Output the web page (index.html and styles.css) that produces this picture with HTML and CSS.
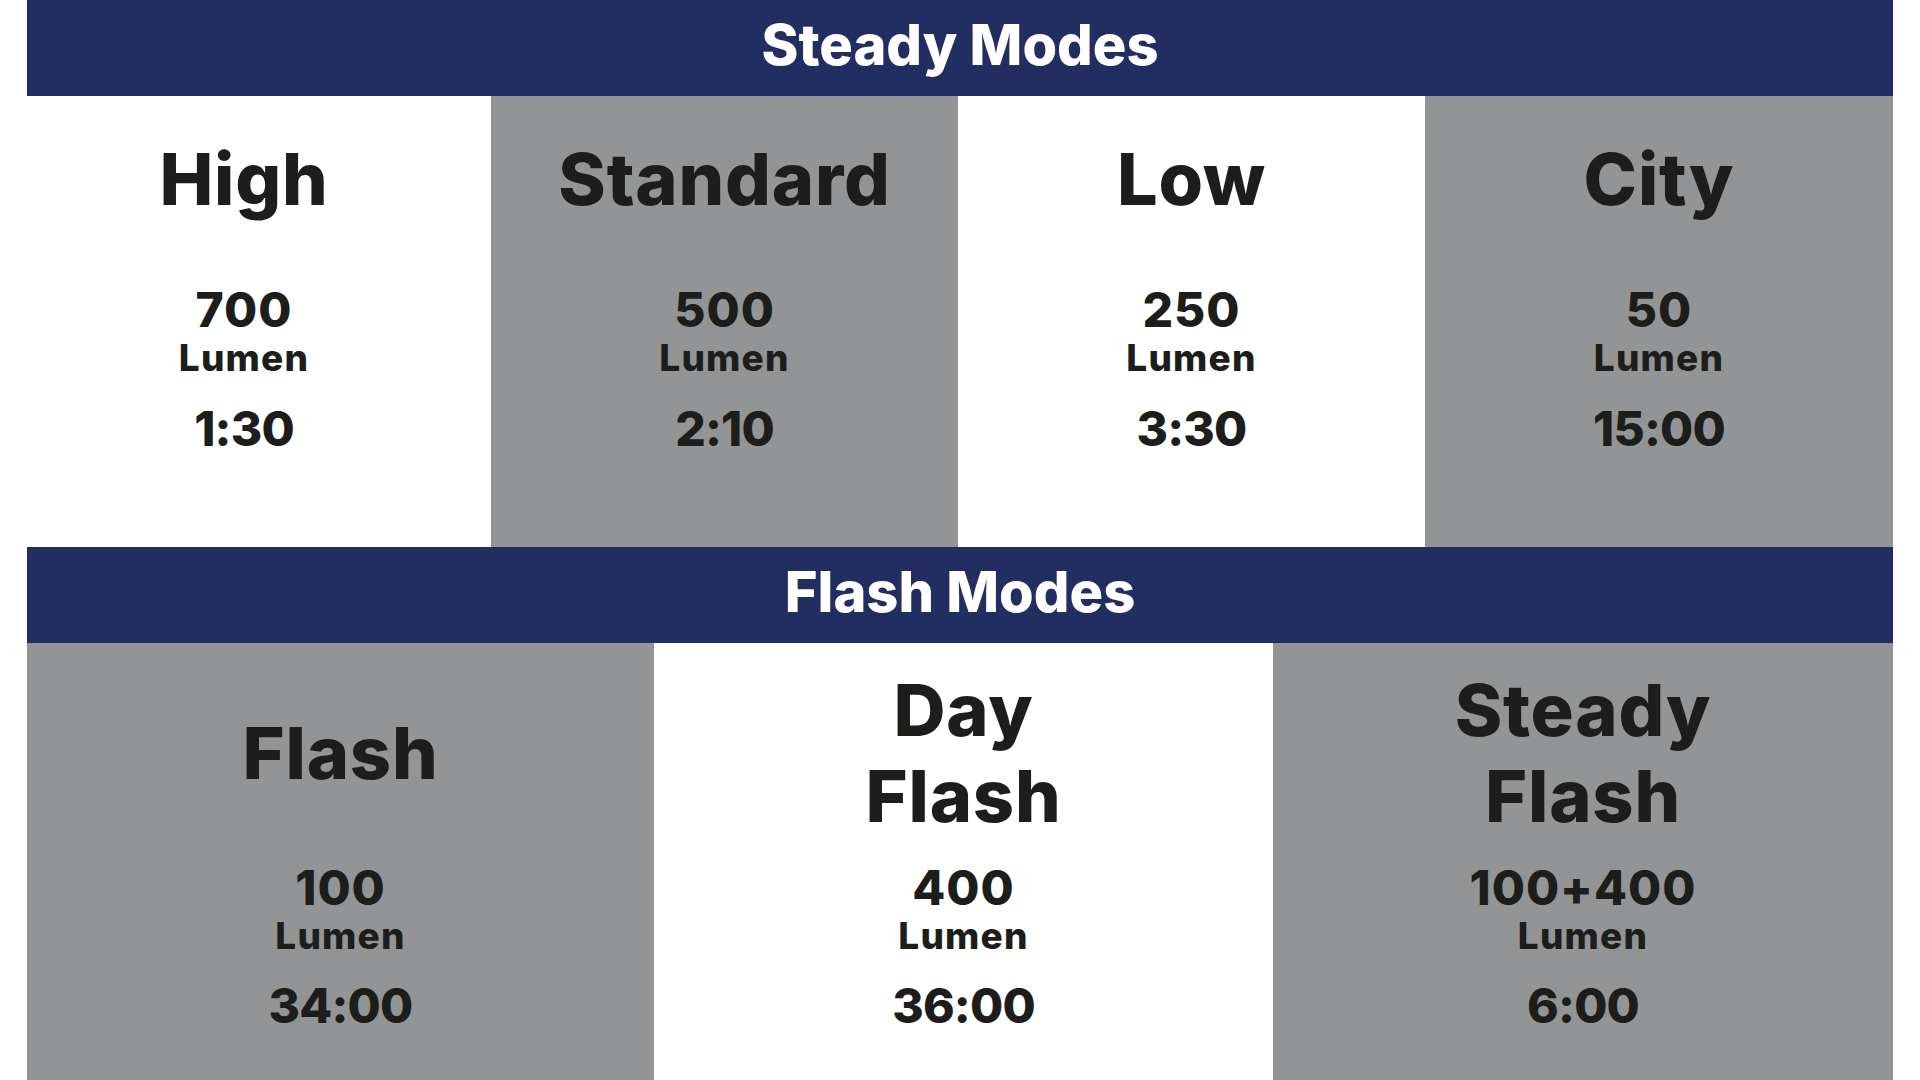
FILE: index.html
```html
<!DOCTYPE html>
<html lang="en">
<head>
<meta charset="utf-8">
<title>Modes</title>
<link rel="stylesheet" href="styles.css">
</head>
<body>
<main class="table">
  <section class="band">
    <h2 class="band-title">Steady Modes</h2>
  </section>
  <section class="row row-steady">
    <div class="cell white shift">
      <div class="title">High</div>
      <div class="num">700</div>
      <div class="unit">Lumen</div>
      <div class="time">1:30</div>
    </div>
    <div class="cell gray">
      <div class="title">Standard</div>
      <div class="num">500</div>
      <div class="unit">Lumen</div>
      <div class="time">2:10</div>
    </div>
    <div class="cell white">
      <div class="title">Low</div>
      <div class="num">250</div>
      <div class="unit">Lumen</div>
      <div class="time">3:30</div>
    </div>
    <div class="cell gray">
      <div class="title">City</div>
      <div class="num">50</div>
      <div class="unit">Lumen</div>
      <div class="time">15:00</div>
    </div>
  </section>
  <section class="band">
    <h2 class="band-title">Flash Modes</h2>
  </section>
  <section class="row row-flash">
    <div class="cell gray">
      <div class="title-box"><div class="title">Flash</div></div>
      <div class="num">100</div>
      <div class="unit">Lumen</div>
      <div class="time">34:00</div>
    </div>
    <div class="cell white">
      <div class="title-box"><div class="title">Day</div><div class="title">Flash</div></div>
      <div class="num">400</div>
      <div class="unit">Lumen</div>
      <div class="time">36:00</div>
    </div>
    <div class="cell gray">
      <div class="title-box"><div class="title">Steady</div><div class="title">Flash</div></div>
      <div class="num">100+400</div>
      <div class="unit">Lumen</div>
      <div class="time">6:00</div>
    </div>
  </section>
</main>
</body>
</html>
```
FILE: styles.css
```css
html, body {
  margin: 0;
  padding: 0;
  background: #ffffff;
}

body {
  font-family: "Inter", "Open Sans", "DejaVu Sans", sans-serif;
  font-weight: 800;
  color: #1d1d1b;
  overflow: hidden;
  height: 1080px;
}

.table {
  margin-left: 27px;
  width: 1866px;
}

.band {
  background: #222d62;
  height: 96px;
  box-sizing: border-box;
  padding-bottom: 7px;
  display: flex;
  align-items: center;
  justify-content: center;
}

.band-title {
  margin: 0;
  font-size: 56px;
  line-height: 56px;
  font-weight: 800;
  color: #ffffff;
  letter-spacing: 0;
}

.row {
  display: grid;
}

.row-steady {
  grid-template-columns: 464px 467px 467px 1fr;
  height: 451px;
}

.row-flash {
  grid-template-columns: 627px 619px 1fr;
  height: 437px;
}

.cell {
  display: flex;
  flex-direction: column;
  align-items: center;
  box-sizing: border-box;
}

.white { background: #ffffff; }
.gray { background: #939496; }

.shift { padding-right: 30px; }

.title {
  font-size: 72px;
  letter-spacing: 0.8px;
  white-space: nowrap;
}

.num {
  font-size: 48px;
  line-height: 56px;
  letter-spacing: 1px;
}

.unit {
  font-size: 37px;
  line-height: 40px;
  letter-spacing: 1.2px;
}

.time {
  font-size: 48px;
  line-height: 56px;
  margin-top: 23px;
  letter-spacing: -0.8px;
}

/* steady row */
.row-steady .cell { padding-top: 41px; }
.row-steady .title { line-height: 84px; height: 84px; }
.row-steady .num { margin-top: 61px; }

/* flash row */
.row-flash .cell { padding-top: 24px; }
.title-box {
  height: 172px;
  display: flex;
  flex-direction: column;
  align-items: center;
  justify-content: center;
}
.row-flash .title { line-height: 86px; }
.row-flash .num { margin-top: 21px; }
.row-flash .time { margin-top: 22px; }
```
